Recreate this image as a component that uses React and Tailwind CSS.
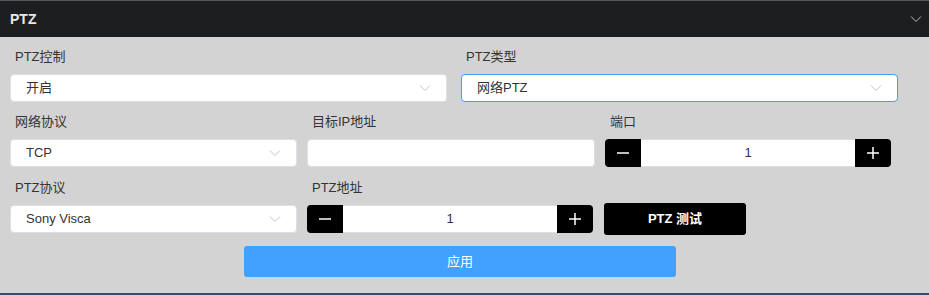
import { useState } from "react";

const font = { fontFamily: '"Liberation Sans", "Noto Sans CJK SC", sans-serif' };

const Chevron = ({ className }) => (
    <svg className={className} width="12" height="8" viewBox="0 0 12 8" fill="none">
        <path d="M1 1.5 L6 6.5 L11 1.5" stroke="currentColor" strokeWidth="1" />
    </svg>
);

const Select = ({ value, width, active }) => (
    <div
        className={`flex items-center justify-between h-[28px] bg-white rounded-[4px] border px-[15px] ${width} ${
            active ? "border-[#409eff]" : "border-[#dcdfe6]"
        }`}
    >
        <span className="text-[13px] text-[#333]">{value}</span>
        <Chevron className="text-[#c0c4cc]" />
    </div>
);

const Stepper = ({ value, setValue }) => (
    <div className="flex h-[28px] w-[286px]">
        <button
            className="w-[36px] h-full bg-black rounded-l-[4px] flex items-center justify-center text-white"
            onClick={() => setValue(Math.max(1, value - 1))}
        >
            <svg width="14" height="14" viewBox="0 0 14 14">
                <path d="M1 7 H13" stroke="currentColor" strokeWidth="1.5" />
            </svg>
        </button>
        <div className="flex-1 bg-white border-y border-[#dcdfe6] flex items-center justify-center text-[13px] text-[#333]">
            {value}
        </div>
        <button
            className="w-[36px] h-full bg-black rounded-r-[4px] flex items-center justify-center text-white"
            onClick={() => setValue(value + 1)}
        >
            <svg width="14" height="14" viewBox="0 0 14 14">
                <path d="M1 7 H13 M7 1 V13" stroke="currentColor" strokeWidth="1.5" />
            </svg>
        </button>
    </div>
);

const Label = ({ children }) => (
    <div className="h-[20px] leading-[20px] text-[13px] text-[#333] pl-[5px] mb-[7px]">{children}</div>
);

const App = () => {
    const [port, setPort] = useState(1);
    const [addr, setAddr] = useState(1);

    return (
        <div className="w-[929px] h-[295px] bg-[#d3d3d3] flex flex-col border-b-2 border-[#3b4a6b]" style={font}>
            <div className="h-[37px] bg-[#1d1e20] border-t border-[#555] flex items-center justify-between pl-[10px] pr-[7px]">
                <span className="text-[14px] font-bold text-[#e8e8e8]">PTZ</span>
                <Chevron className="text-[#bbb]" />
            </div>

            <div className="pl-[10px] pt-[10px] flex flex-col">
                <div className="flex gap-[14px]">
                    <div>
                        <Label>PTZ控制</Label>
                        <Select value="开启" width="w-[437px]" />
                    </div>
                    <div>
                        <Label>PTZ类型</Label>
                        <Select value="网络PTZ" width="w-[437px]" active />
                    </div>
                </div>

                <div className="flex gap-[10px] mt-[10px]">
                    <div>
                        <Label>网络协议</Label>
                        <Select value="TCP" width="w-[287px]" />
                    </div>
                    <div>
                        <Label>目标IP地址</Label>
                        <input
                            type="text"
                            className="h-[28px] w-[288px] bg-white rounded-[4px] border border-[#dcdfe6] px-[10px] text-[13px] outline-none"
                        />
                    </div>
                    <div>
                        <Label>端口</Label>
                        <Stepper value={port} setValue={setPort} />
                    </div>
                </div>

                <div className="flex gap-[10px] mt-[11px]">
                    <div>
                        <Label>PTZ协议</Label>
                        <Select value="Sony Visca" width="w-[287px]" />
                    </div>
                    <div>
                        <Label>PTZ地址</Label>
                        <Stepper value={addr} setValue={setAddr} />
                    </div>
                    <div className="flex items-end">
                        <button className="w-[142px] h-[32px] bg-black rounded-[3px] text-white text-[13px] font-bold mb-[-2px] ml-[1px]">
                            PTZ 测试
                        </button>
                    </div>
                </div>

                <div className="flex justify-center w-[900px] mt-[13px]">
                    <button className="w-[432px] h-[31px] bg-[#42a0ff] rounded-[3px] text-white text-[13px]">
                        应用
                    </button>
                </div>
            </div>
        </div>
    );
};

export default App;
